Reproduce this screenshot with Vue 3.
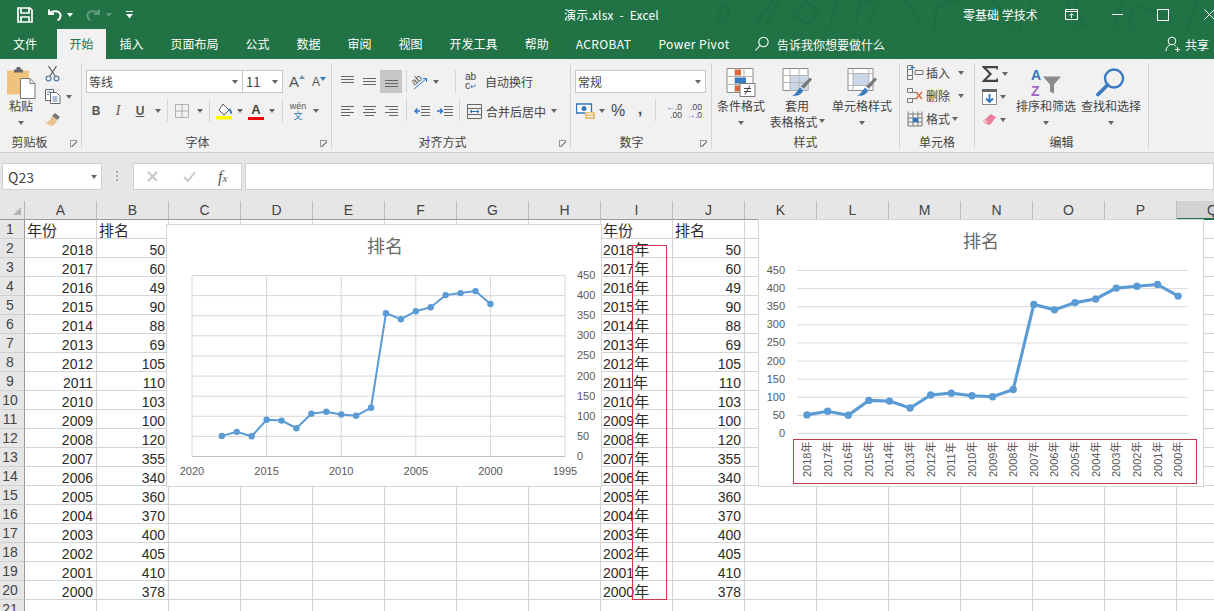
<script setup>
import { computed } from 'vue'

const years = [2018,2017,2016,2015,2014,2013,2012,2011,2010,2009,2008,2007,2006,2005,2004,2003,2002,2001,2000]
const values = [50,60,49,90,88,69,105,110,103,100,120,355,340,360,370,400,405,410,378]
const letters = 'ABCDEFGHIJKLMNOPQ'.split('')
const rows = Array.from({ length: 21 }, (_, i) => i + 1)
const tabs = ['插入','页面布局','公式','数据','审阅','视图','开发工具','帮助','ACROBAT','Power Pivot']

// cell content for a sheet position
const cell = (row, col) => {
  if (row === 1) {
    if (col === 'A' || col === 'I') return { text: '年份' }
    if (col === 'B' || col === 'J') return { text: '排名' }
    return null
  }
  const i = row - 2
  if (i >= years.length) return null
  if (col === 'A') return { text: years[i], num: true }
  if (col === 'B' || col === 'J') return { text: values[i], num: true }
  if (col === 'I') return { text: years[i], suffix: '年' }
  return null
}

// chart 1: value axis on the right, x axis reversed, in card coordinates
const c1 = computed(() => values.map((v, i) => ({
  x: 26 + (2020 - years[i]) * 14.92,
  y: 232 - v * 181 / 450
})))
const c1Line = computed(() => c1.value.map(p => `${p.x},${p.y}`).join(' '))

// chart 2: category axis
const c2 = computed(() => values.map((v, i) => ({
  x: 49 + i * 20.62,
  y: 214 - v * 163 / 450
})))
const c2Line = computed(() => c2.value.map(p => `${p.x},${p.y}`).join(' '))

const ticks = [0,50,100,150,200,250,300,350,400,450]
</script>

<template>
  <div class="app">
    <div class="titlebar">
      <svg class="doodle" width="520" height="59" viewBox="0 0 520 59" fill="none" stroke="#000" stroke-opacity=".05" stroke-width="2.500">
        <path d="M28 4l8 3-4 16-8-3z M60 26l20-26M70 28l16-28"/>
        <path d="M100 16l12-14 12 8-10 14z M135 30l8-30 M160 28l8-28l14 4l-8 24"/>
        <path d="M208 -2l24 30M240 30l2-18c1-8 10-10 30-12M300 0l22 34M322 34l18-34"/>
        <path d="M372 -2l12 30l6-2l-10-28M420 30l8-30M440 6l30 8l-6 20l-30-8zM492 30l12-34"/>
      </svg>
      <div class="qat">
        <svg class="save" width="18" height="16" viewBox="0 0 18 16" fill="none" stroke="#fff" stroke-width="1.700">
          <path d="M2 1h12l2 2v12H2z"/><path d="M5 1v5h8V1M5 15v-5h8v5"/>
        </svg>
        <svg class="undo" width="15" height="13" viewBox="0 0 15 13" fill="none" stroke="#fff" stroke-width="2">
          <path d="M2 1.500v4.500h5"/><path d="M2.500 6c2-3.500 10-4 11 1 .5 3-1.500 4.500-3 5.500"/>
        </svg>
        <i class="caret white"></i>
        <svg class="redo" width="15" height="13" viewBox="0 0 15 13" fill="none" stroke="#5f9a7c" stroke-width="2">
          <path d="M13 1.500v4.500h-5"/><path d="M12.500 6c-2-3.500-10-4-11 1-.5 3 1.500 4.500 3 5.500"/>
        </svg>
        <i class="caret faded"></i>
        <svg class="custom" width="7" height="8" viewBox="0 0 7 8" fill="#fff"><path d="M0 0h7v1H0zM0 3h7L3.500 7.500z"/></svg>
      </div>
      <div class="doc-title">演示.xlsx&nbsp;&nbsp;-&nbsp;&nbsp;Excel</div>
      <div class="win">
        <span class="account">零基础 学技术</span>
        <svg class="w-ribbon" width="13" height="11" viewBox="0 0 13 11" fill="none" stroke="#fff"><path d="M.5.5h12v10H.5zM.5 2.500h12M6.500 9V5M4.500 6.500l2-2 2 2"/></svg>
        <span class="w-min"></span>
        <span class="w-max"></span>
        <svg class="w-close" width="11" height="11" viewBox="0 0 11 11" stroke="#fff"><path d="M.5.5l10 10M10.500.5l-10 10"/></svg>
      </div>
    </div>

    <div class="tabs">
      <div class="tab file">文件</div>
      <div class="tab active">开始</div>
      <div v-for="t in tabs" :key="t" class="tab" :class="{ latin: /[a-z]/i.test(t) }">{{ t }}</div>
      <div class="tell">
        <svg width="16" height="16" viewBox="0 0 16 16" fill="none" stroke="#fff" stroke-width="1.100"><circle cx="9.500" cy="6" r="4.700"/><path d="M6 9.500l-4.500 5"/></svg>
        <span>告诉我你想要做什么</span>
      </div>
      <div class="share">
        <svg width="16" height="16" viewBox="0 0 16 16" fill="none" stroke="#fff"><circle cx="7" cy="5" r="3.800"/><path d="M1 15c0-3.500 2-5 4-6M9.500 9.500c.8.300 1.200.6 1.700 1M10 13.500h5M12.500 11v5"/></svg>
        <span>共享</span>
      </div>
    </div>

    <div class="ribbon">
      <!-- clipboard -->
      <section class="grp g-clip">
        <div class="body">
          <div class="big paste">
            <svg width="30" height="32" viewBox="0 0 30 32">
              <path d="M1 4h22v24H1z" fill="#efc27d"/>
              <path d="M8 3h2l1-2.500h3L15 3h2v3H8z" fill="#666"/>
              <path d="M14.500 12H24l5 5v15H14.500z" fill="#fff" stroke="#777"/>
              <path d="M24 12v5h5" fill="none" stroke="#777"/>
            </svg>
            <span class="blabel">粘贴</span>
            <i class="caret under"></i>
          </div>
          <div class="clip-col">
            <div class="row s-row">
              <svg width="15" height="16" viewBox="0 0 15 16" fill="none" stroke="#5d7fa6" stroke-width="1.300">
                <path d="M3.500 0l6.500 10M11.500 0L5 10" stroke="#666"/><circle cx="3.500" cy="12.500" r="2.400"/><circle cx="11.500" cy="12.500" r="2.400"/>
              </svg>
            </div>
            <div class="row s-row">
              <svg width="16" height="15" viewBox="0 0 16 15" fill="#fff" stroke="#666">
                <path d="M.5.5h8v11h-8z"/><path d="M5.500 3.500h6l3.500 3.500v7.500H5.500z"/>
                <path d="M2 3h4M2 5.500h2M7.500 8h5M7.500 10h5M7.500 12h5" stroke="#5d7fa6"/>
              </svg>
              <i class="caret c-tight"></i>
            </div>
            <div class="row s-row">
              <svg width="17" height="15" viewBox="0 0 17 15">
                <path d="M10 1l5 4-3 3-5-4z" fill="#777"/>
                <path d="M7 4l5 4c-1 3-3 5-5 6l-7-3c3 0 5-3 7-7z" fill="#e8c287"/>
              </svg>
            </div>
          </div>
        </div>
        <div class="glabel">剪贴板</div>
        <i class="launcher"></i>
      </section>

      <!-- font -->
      <section class="grp g-font">
        <div class="body col">
          <div class="row r1">
            <div class="combo font-name"><span>等线</span><i class="caret"></i></div>
            <div class="combo font-size"><span>11</span><i class="caret"></i></div>
            <span class="grow-a big-a">A<svg width="6" height="4" viewBox="0 0 6 4" fill="#6d93b8"><path d="M0 4l3-4 3 4z"/></svg></span>
            <span class="grow-a small-a">A<svg width="6" height="4" viewBox="0 0 6 4" fill="#2f77bb"><path d="M0 0l3 4 3-4z"/></svg></span>
          </div>
          <div class="row r2">
            <span class="ic fb">B</span>
            <span class="ic fi">I</span>
            <span class="ic fu">U</span>
            <i class="caret"></i>
            <i class="sep m3"></i>
            <span class="ic ml3">
              <svg width="14" height="14" viewBox="0 0 14 14" fill="none" stroke="#777" stroke-dasharray="1 1"><path d="M.5.5h13v13H.5zM7 .5v13M.5 7h13"/></svg>
            </span>
            <i class="caret"></i>
            <i class="sep m3"></i>
            <span class="ic ml3">
              <svg width="18" height="17" viewBox="0 0 18 17">
                <path d="M8 1l6 6-5 5-5-5z" fill="#fff" stroke="#555"/><path d="M14 6c2 2 2.500 3.500 1.500 4.500" stroke="#3a7abf" stroke-width="2" fill="none"/>
                <path d="M1 13h16v3.500H1z" fill="#ffff00"/>
              </svg>
            </span>
            <i class="caret cm2"></i>
            <span class="ic ml-1 color-a">
              <b>A</b><i></i>
            </span>
            <i class="caret cm2"></i>
            <i class="sep m4"></i>
            <span class="ic ml4 wen"><small>wén</small><em>文</em></span>
            <i class="caret"></i>
          </div>
        </div>
        <div class="glabel">字体</div>
        <i class="launcher"></i>
      </section>

      <!-- alignment -->
      <section class="grp g-align">
        <div class="body col">
          <div class="row r1">
            <span class="ic ml4"><svg width="15" height="13" viewBox="0 0 15 13" stroke="#666"><path d="M1 1.500h13M1 4.500h13M1 7.500h13" /></svg></span>
            <span class="ic"><svg width="15" height="13" viewBox="0 0 15 13" stroke="#666"><path d="M1 3.500h13M1 6.500h13M1 9.500h13" /></svg></span>
            <span class="ic selected"><svg width="15" height="13" viewBox="0 0 15 13" stroke="#666"><path d="M1 5.500h13M1 8.500h13M1 11.500h13" /></svg></span>
            <i class="sep tall m4"></i>
            <span class="ic ml2">
              <svg class="over" width="18" height="16" viewBox="0 0 18 16" fill="none" stroke="#666">
                <text x="1" y="10" font-size="10" fill="#555" stroke="none" transform="rotate(-40 5 8)" font-family="Liberation Sans">ab</text>
                <path d="M3 15L15 5M12 4.500h3.500V8" stroke="#2f77bb"/>
              </svg>
            </span>
            <i class="caret cm2"></i>
            <i class="sep tall m16"></i>
            <span class="ic ml4 wrap-ic"><b>ab</b><b>c<i>↵</i></b></span>
            <span class="txt ml3">自动换行</span>
          </div>
          <div class="row r2">
            <span class="ic ml4"><svg width="15" height="13" viewBox="0 0 15 13" stroke="#666"><path d="M1 1.500h13M1 4.500h9M1 7.500h13M1 10.500h9"/></svg></span>
            <span class="ic"><svg width="15" height="13" viewBox="0 0 15 13" stroke="#666"><path d="M1 1.500h13M3 4.500h9M1 7.500h13M3 10.500h9"/></svg></span>
            <span class="ic"><svg width="15" height="13" viewBox="0 0 15 13" stroke="#666"><path d="M1 1.500h13M5 4.500h9M1 7.500h13M5 10.500h9"/></svg></span>
            <i class="sep tall m4"></i>
            <span class="ic ml4"><svg width="16" height="13" viewBox="0 0 16 13" fill="none"><path d="M7 1.500h9M7 4.500h9M7 7.500h9M7 10.500h9M1 12.500" stroke="#666"/><path d="M6 6H1M3.500 3.500L1 6l2.500 2.500" stroke="#2f77bb" stroke-width="1.500"/></svg></span>
            <span class="ic ml1"><svg width="16" height="13" viewBox="0 0 16 13" fill="none"><path d="M7 1.500h9M7 4.500h9M7 7.500h9M7 10.500h9" stroke="#666"/><path d="M0 6h5M3 3.500L5.500 6 3 8.500" stroke="#2f77bb" stroke-width="1.500"/></svg></span>
            <i class="sep tall m3"></i>
            <span class="ic ml3"><svg width="15" height="15" viewBox="0 0 15 15" fill="none" stroke="#666"><path d="M.5.5h14v14H.5zM.5 4.500h14M.5 10.500h14"/><path d="M3 7.500h9M5 6l-2 1.500L5 9M10 6l2 1.500L10 9" stroke="#2f77bb"/></svg></span>
            <span class="txt ml1">合并后居中</span>
            <i class="caret ml5"></i>
          </div>
        </div>
        <div class="glabel">对齐方式</div>
        <i class="launcher"></i>
      </section>

      <!-- number -->
      <section class="grp g-num">
        <div class="body col">
          <div class="row r1">
            <div class="combo num-fmt"><span>常规</span><i class="caret"></i></div>
          </div>
          <div class="row r2">
            <span class="ic ml4">
              <svg width="20" height="17" viewBox="0 0 20 17">
                <path d="M.5 1h15v9H.5z" fill="#fff" stroke="#2f77bb" stroke-width="1.300"/>
                <circle cx="8" cy="5.500" r="2.500" fill="#2f77bb"/>
                <path d="M9 9h10v7H9z" fill="#e9c07a"/><path d="M11 11h6M11 13.500h6" stroke="#fff"/>
              </svg>
            </span>
            <i class="caret cm2"></i>
            <span class="ic pct">%</span>
            <span class="ic comma">,</span>
            <i class="sep tall m5"></i>
            <span class="ic ml4 deci"><span><em>←</em>.0</span><span>.00</span></span>
            <span class="ic deci w20"><span>.00</span><span><em>→</em>.0</span></span>
          </div>
        </div>
        <div class="glabel">数字</div>
        <i class="launcher"></i>
      </section>

      <!-- styles -->
      <section class="grp g-style">
        <div class="body">
          <div class="big b-cond">
            <svg width="30" height="30" viewBox="0 0 30 30">
              <path d="M1 1h26v24H1z" fill="#fff" stroke="#8a8a8a"/>
              <path d="M1 9h26M1 17h26M9 1v24M18 1v24" stroke="#b5b5b5" fill="none"/>
              <path d="M9 2h6v6H9z" fill="#d9683a"/><path d="M9 10h11v6H9z" fill="#3a7abf"/><path d="M9 18h8v6H9z" fill="#d9683a"/>
              <path d="M14 16h15v13H14z" fill="#fff" stroke="#777"/>
              <path d="M18 21h7M18 24h7M24 18l-5 9" stroke="#444" fill="none"/>
            </svg>
            <span class="blabel">条件格式</span>
            <i class="caret under"></i>
          </div>
          <div class="big b-table">
            <svg width="30" height="30" viewBox="0 0 30 30">
              <path d="M1 1h25v22H1z" fill="#fff" stroke="#8a8a8a"/>
              <path d="M8 8h18v15H8z" fill="#c9d7e8"/>
              <path d="M1 8h25M1 15h25M8 1v22M17 1v22" stroke="#b5b5b5" fill="none"/>
              <path d="M28 10l2 2-8 9-3-2z" fill="#777"/>
              <path d="M18 20l3 3c-1 4-6 6-11 5 4-1 5-5 8-8z" fill="#3a7abf"/>
            </svg>
            <span class="blabel">套用</span>
            <span class="blabel second">表格格式<i class="caret"></i></span>
          </div>
          <div class="big b-cell">
            <svg width="30" height="30" viewBox="0 0 30 30">
              <path d="M1 1h25v22H1z" fill="#fff" stroke="#8a8a8a"/>
              <path d="M6 6h16v12H6z" fill="#c9d7e8"/>
              <path d="M1 6h25M1 18h25M6 1v22M22 1v22" stroke="#b5b5b5" fill="none"/>
              <path d="M28 10l2 2-8 9-3-2z" fill="#777"/>
              <path d="M18 20l3 3c-1 4-6 6-11 5 4-1 5-5 8-8z" fill="#3a7abf"/>
            </svg>
            <span class="blabel">单元格样式</span>
            <i class="caret under"></i>
          </div>
        </div>
        <div class="glabel">样式</div>
      </section>

      <!-- cells -->
      <section class="grp g-cells">
        <div class="body col tight">
          <div class="row s-row">
            <svg class="cell-ic" width="17" height="15" viewBox="0 0 17 15" fill="none" stroke="#777"><path d="M.5.5h5v4h-5zM.5 10.500h5v4h-5zM.5 4.500v6M5.500 4.500v6M8 5.500h8v4H8z"/><path d="M8 2.500H4l2-2M4 2.500l2 2" stroke="#2f77bb"/></svg>
            <span class="txt">插入</span><i class="caret ml8"></i>
          </div>
          <div class="row s-row">
            <svg class="cell-ic" width="17" height="15" viewBox="0 0 17 15" fill="none" stroke="#777"><path d="M.5.5h5v4h-5zM.5 10.500h5v4h-5zM5.500 4.500h5M5.500 10.500h5"/><path d="M9 4l6 7M15 4l-6 7" stroke="#d9683a" stroke-width="1.400"/></svg>
            <span class="txt">删除</span><i class="caret ml8"></i>
          </div>
          <div class="row s-row">
            <svg class="cell-ic" width="17" height="16" viewBox="0 0 17 16" fill="none" stroke="#777"><path d="M1 3h14v12H1zM1 7h14M1 11h14M6 3v12M11 3v12M1 .5v2M6 .5v2M11 .5v2M15 .5v2"/><path d="M6 7h5v4H6z" fill="#2f77bb" stroke="none"/></svg>
            <span class="txt">格式</span><i class="caret ml2"></i>
          </div>
        </div>
        <div class="glabel">单元格</div>
      </section>

      <!-- editing -->
      <section class="grp g-edit">
        <div class="body">
          <div class="edit-col tight">
            <div class="row s-row">
              <svg class="edit-ic" width="16" height="16" viewBox="0 0 16 16" fill="none" stroke="#444" stroke-width="2.200"><path d="M15.500 3.500V1.200H2L8.500 8 2 14.800h13.500v-2.300"/></svg>
              <i class="caret"></i>
            </div>
            <div class="row s-row">
              <svg class="edit-ic" width="15" height="16" viewBox="0 0 15 16"><path d="M.5.5h14v15H.5z" fill="#fff" stroke="#888"/><path d="M0 0h15v3H0z" fill="#666"/><path d="M7.500 5v8M4 9.500l3.500 3.500L11 9.500" fill="none" stroke="#2f77bb" stroke-width="1.800"/></svg>
              <i class="caret cm-1"></i>
            </div>
            <div class="row s-row">
              <svg class="edit-ic" width="15" height="13" viewBox="0 0 15 13"><path d="M9 1l5 3-6 8-4-1-3-3z" fill="#eb7f9b"/><path d="M1 8l3 3 2-2-3-3z" fill="#f4b9c9"/></svg>
              <i class="caret cm-1"></i>
            </div>
          </div>
          <div class="big b-sort">
            <svg class="over" width="32" height="30" viewBox="0 0 32 30">
              <text x="1" y="12.500" font-size="14" font-weight="700" fill="#2f77bb" font-family="Liberation Sans">A</text>
              <text x="1" y="28.500" font-size="14" font-weight="700" fill="#9a6ac6" font-family="Liberation Sans">Z</text>
              <path d="M13 9h18l-7 8v9l-4-2v-7z" fill="#8a8a8a"/>
            </svg>
            <span class="blabel">排序和筛选</span>
            <i class="caret under"></i>
          </div>
          <div class="big b-find">
            <svg width="30" height="30" viewBox="0 0 30 30" fill="none">
              <circle cx="18" cy="11" r="9" stroke="#3a7abf" stroke-width="2.400"/>
              <path d="M11.500 17.500L2 27" stroke="#3a7abf" stroke-width="3.800" stroke-linecap="round"/>
            </svg>
            <span class="blabel">查找和选择</span>
            <i class="caret under"></i>
          </div>
        </div>
        <div class="glabel">编辑</div>
      </section>
    </div>

    <div class="formula">
      <div class="namebox"><span>Q23</span><i class="caret"></i></div>
      <span class="dots"></span>
      <div class="fx-box">
        <svg width="11" height="11" viewBox="0 0 11 11" stroke="#c6c6c6" stroke-width="1.800"><path d="M1 1l9 9M10 1l-9 9"/></svg>
        <svg width="13" height="11" viewBox="0 0 13 11" fill="none" stroke="#c6c6c6" stroke-width="1.800"><path d="M1 6l4 4 7-9"/></svg>
        <span class="fx">f<sub>x</sub></span>
      </div>
      <div class="input"></div>
    </div>

    <div class="sheet-wrap">
      <div class="sheet">
        <div class="corner">
          <svg width="8" height="8" viewBox="0 0 8 8"><path d="M8 0v8H0z" fill="#b4b4b4"/></svg>
        </div>
        <div v-for="l in letters" :key="l" class="chead" :class="{ cur: l === 'Q' }">{{ l }}</div>
        <template v-for="r in rows" :key="r">
          <div class="rhead">{{ r }}</div>
          <div v-for="l in letters" :key="l" class="cell" :class="{ num: cell(r, l)?.num }">
            <template v-if="cell(r, l)">
              <span :class="cell(r, l).num || cell(r, l).suffix ? 'digits' : ''">{{ cell(r, l).text }}</span><span v-if="cell(r, l).suffix">{{ cell(r, l).suffix }}</span>
            </template>
          </div>
        </template>
      </div>

      <div class="year-mark"></div>

      <!-- scatter chart, reversed x axis -->
      <div class="chart chart1">
        <svg width="436" height="263" viewBox="0 0 436 263">
          <text x="219" y="29" class="c-title" text-anchor="middle">排名</text>
          <g stroke="#d6d6d6" fill="none">
            <path v-for="t in ticks" :key="t" :d="`M26 ${232.5 - t * 181 / 450}H399`"/>
            <path v-for="x in [26,100.6,175.200,249.800,324.400,399]" :key="x" :d="`M${x} 51V232`"/>
          </g>
          <path d="M26 232.500H399" stroke="#bfbfbf"/>
          <text v-for="t in ticks" :key="t" x="411" :y="236 - t * 181 / 450" class="c-axis">{{ t }}</text>
          <text v-for="(y, i) in [2020,2015,2010,2005,2000,1995]" :key="y" :x="26 + i * 74.6" y="251" text-anchor="middle" class="c-axis">{{ y }}</text>
          <polyline :points="c1Line" fill="none" stroke="#5b9bd5" stroke-width="2"/>
          <circle v-for="(p, i) in c1" :key="i" :cx="p.x" :cy="p.y" r="3.200" fill="#5b9bd5"/>
        </svg>
      </div>

      <!-- line chart -->
      <div class="chart chart2">
        <svg width="446" height="268" viewBox="0 0 446 268">
          <text x="223" y="29" class="c-title" text-anchor="middle">排名</text>
          <g stroke="#d9d9d9" fill="none">
            <path v-for="t in ticks" :key="t" :d="`M39 ${214.500 - t * 163 / 450}H430`"/>
          </g>
          <text v-for="t in ticks" :key="t" x="27" :y="218 - t * 163 / 450" text-anchor="end" class="c-axis">{{ t }}</text>
          <polyline :points="c2Line" fill="none" stroke="#5b9bd5" stroke-width="3.100"/>
          <circle v-for="(p, i) in c2" :key="i" :cx="p.x" :cy="p.y" r="3.700" fill="#5b9bd5"/>
          <text v-for="(y, i) in years" :key="y" class="c-axis c-vert" :transform="`translate(${53 + i * 20.62} 258) rotate(-90)`">{{ y }}年</text>
          <rect x="35.500" y="220.500" width="403" height="44" fill="none" stroke="#c0394f"/>
        </svg>
      </div>
    </div>
  </div>
</template>

<style>
html, body { margin: 0; width: 1214px; height: 611px; overflow: hidden; background: #e6e6e6; }
</style>

<style scoped>
.app {
  width: 1214px;
  height: 611px;
  overflow: hidden;
  display: flex;
  flex-direction: column;
  font-family: "Noto Sans CJK SC", "Liberation Sans", sans-serif;
  font-size: 12px;
  color: #444;
}
i, em { font-style: normal; }
svg { flex: none; }
.over { overflow: visible; }

/* title bar */
.titlebar {
  height: 29px;
  background: #217346;
  color: #fff;
  display: flex;
  align-items: center;
  position: relative;
  flex: none;
}
.doodle { position: absolute; left: 694px; top: 0; pointer-events: none; }
.qat { display: flex; align-items: center; width: 564px; flex: none; }
.save { margin-left: 16px; }
.undo { margin-left: 13px; }
.redo { margin-left: 10px; }
.custom { margin-left: 11px; }
.doc-title { width: 399px; flex: none; position: relative; white-space: nowrap; letter-spacing: .2px; }
.win { display: flex; align-items: center; position: relative; white-space: nowrap; flex: none; }
.account { width: 76px; flex: none; }
.w-ribbon { margin-left: 26px; }
.w-min { width: 11px; height: 1px; background: #fff; margin-left: 34px; flex: none; }
.w-max { width: 10px; height: 10px; border: 1px solid #fff; margin-left: 34px; flex: none; }
.w-close { margin-left: 35px; }

/* tabs */
.tabs {
  height: 30px;
  background: #217346;
  color: #fff;
  display: flex;
  align-items: center;
  flex: none;
  position: relative;
}
.tab { padding: 0 13.500px; line-height: 30px; white-space: nowrap; }
.tab.latin { letter-spacing: .4px; }
.tab.file { width: 29px; padding: 0 0 0 13px; margin-right: 15px; }
.tab.active { background: #f1f1f1; color: #217346; padding: 0 12.500px; }
.tell { display: flex; align-items: center; gap: 7px; margin-left: 11px; white-space: nowrap; }
.share { display: flex; align-items: center; gap: 4px; margin-left: 280px; white-space: nowrap; }

/* ribbon */
.ribbon {
  height: 89px;
  padding-top: 4px;
  background: #f1f1f1;
  border-bottom: 1px solid #cfcfcf;
  display: flex;
  flex: none;
  color: #444;
}
.grp {
  height: 85px;
  box-sizing: border-box;
  border-right: 1px solid #d4d4d4;
  display: flex;
  flex-direction: column;
  position: relative;
  flex: none;
}
.g-clip { width: 82px; }
.g-font { width: 250px; }
.g-align { width: 239px; }
.g-num { width: 141px; }
.g-style { width: 188px; }
.g-cells { width: 75px; }
.g-edit { width: 174px; }
.body { height: 70px; display: flex; flex: none; }
.body.col { flex-direction: column; padding-top: 7px; box-sizing: border-box; gap: 6px; }
.body.tight, .tight { flex-direction: column; display: flex; padding-top: 0; gap: 0; margin-top: -2px; }
.body.tight { height: 72px; }
.edit-col.tight { margin-top: -1px; }
.glabel { text-align: center; line-height: 18px; height: 15px; white-space: nowrap; }
.g-clip .glabel { padding-right: 22px; }
.g-font .glabel { padding-right: 18px; }
.g-align .glabel { padding-right: 17px; }
.g-num .glabel { padding-right: 19px; }
.launcher {
  position: absolute;
  right: 4px;
  bottom: 1px;
  width: 6px;
  height: 6px;
  border-left: 1px solid #999;
  border-top: 1px solid #999;
  background: linear-gradient(135deg, transparent 45%, #888 45%, #888 60%, transparent 60%);
}
.row { display: flex; align-items: center; flex: none; }
.r1 { height: 23px; }
.r2 { height: 24px; }
.s-row { height: 23px; }
.caret {
  display: inline-block;
  width: 0;
  height: 0;
  border-left: 3.500px solid transparent;
  border-right: 3.500px solid transparent;
  border-top: 4px solid #666;
  margin: 0 3px 0 4px;
  flex: none;
}
.caret.white { border-top-color: #fff; margin-left: 5px; }
.caret.faded { border-top-color: #5f9a7c; margin-left: 5px; }
.caret.under { margin: 8px 0 0; }
.c-tight { margin-left: 5px; }
.cm2 { margin-left: 2px; }
.cm-1 { margin-left: 3px; }
.ml1 { margin-left: 1px; }
.ml2 { margin-left: 2px; }
.ml3 { margin-left: 3px; }
.ml4 { margin-left: 4px; }
.ml5 { margin-left: 5px; }
.ml8 { margin-left: 8px; }
.ml-1 { margin-left: -1px; }
.ic {
  width: 22px;
  height: 23px;
  display: flex;
  align-items: center;
  justify-content: center;
  flex: none;
}
.sep { width: 1px; height: 22px; background: #d4d4d4; flex: none; }
.sep.m3 { margin-left: 3px; }
.sep.m4 { margin-left: 4px; }
.sep.m5 { margin-left: 5px; }
.sep.m16 { margin-left: 13px; }
.sep.tall { align-self: flex-start; }
.txt { white-space: nowrap; flex: none; }
.selected { background: #c6c6c6; }

.big { display: flex; flex-direction: column; align-items: center; padding-top: 3px; flex: none; }
.big > svg { height: 33px; flex: none; }
.blabel { line-height: 14px; white-space: nowrap; height: 14px; }
.blabel.second { margin-top: 1px; line-height: 15px; display: flex; align-items: center; }
.blabel.second .caret { margin: 0 0 0 1px; }
.paste { width: 34px; margin-left: 4px; }
.clip-col { margin-left: 6px; width: 34px; display: flex; flex-direction: column; margin-top: -1px; }
.clip-col .s-row { padding-left: 1px; }

.combo {
  height: 23px;
  box-sizing: border-box;
  background: #fff;
  border: 1px solid #c6c6c6;
  display: flex;
  align-items: center;
  justify-content: space-between;
  padding-left: 2px;
  font-size: 12px;
  flex: none;
}
.combo .caret { margin: 0 4px 0 0; }
.font-name { width: 157px; margin-left: 4px; }
.font-size { width: 40px; margin-left: 0; border-left: 0; padding-left: 3px; font-size: 13px; }
.num-fmt { width: 131px; margin-left: 4px; }
.grow-a { display: flex; align-items: flex-start; font-family: "Liberation Sans", sans-serif; color: #555; flex: none; }
.big-a { font-size: 15px; margin-left: 6px; width: 21px; }
.small-a { font-size: 12px; margin-left: 2px; align-items: flex-start; }
.grow-a svg { margin-top: 2px; }
.fb, .fi, .fu { font-family: "Liberation Serif", serif; color: #555; font-size: 13px; font-weight: 700; }
.fb { font-family: "Liberation Sans", sans-serif; margin-left: 3px; font-size: 12px; }
.fi { font-style: italic; font-weight: 400; font-size: 14px; }
.fu { font-family: "Liberation Sans", sans-serif; text-decoration: underline; font-size: 12px; }
.color-a { flex-direction: column; line-height: 1; position: relative; }
.color-a b { font-family: "Liberation Sans", sans-serif; font-size: 13px; color: #444; line-height: 13px; }
.color-a i { display: block; width: 16px; height: 3px; background: #f00000; margin-top: 1px; }
.wen { flex-direction: column; font-size: 9px; line-height: 10px; }
.wen small { font-size: 9px; font-family: "Liberation Sans", sans-serif; color: #555; }
.wen em { color: #2f77bb; font-size: 9px; }
.wrap-ic { flex-direction: column; font-family: "Liberation Sans", sans-serif; font-size: 10px; line-height: 9px; align-items: flex-start; padding-left: 5px; box-sizing: border-box; }
.wrap-ic b { font-weight: 400; }
.wrap-ic i { color: #2f77bb; font-size: 8px; }
.pct { width: 20px; font-family: "Liberation Sans", sans-serif; font-size: 16px; }
.comma { font-family: "Liberation Sans", sans-serif; font-size: 15px; font-weight: 700; padding: 0 0 6px 2px; box-sizing: border-box; }
.deci { flex-direction: column; font-family: "Liberation Sans", sans-serif; font-size: 8.500px; line-height: 8px; align-items: flex-end; }
.deci.w20 { width: 20px; }
.deci em { color: #2f77bb; }

.b-cond { width: 50px; margin-left: 4px; }
.b-table { width: 58px; margin-left: 2px; }
.b-cell { width: 60px; margin-left: 6px; }
.g-cells .s-row { padding-left: 7px; }
.cell-ic { width: 17px; flex: none; margin-right: 2px; }
.edit-col { width: 41px; }
.edit-col .s-row { padding-left: 7px; }
.edit-ic { flex: none; }
.b-sort { width: 60px; }
.b-find { width: 60px; margin-left: 5px; }

/* formula bar */
.formula {
  height: 48px;
  box-sizing: border-box;
  padding: 10px 0 11px 2px;
  background: #e6e6e6;
  display: flex;
  flex: none;
}
.namebox, .fx-box, .input { background: #fff; border: 1px solid #d0d0d0; box-sizing: border-box; flex: none; }
.namebox {
  width: 100px;
  display: flex;
  align-items: center;
  justify-content: space-between;
  padding-left: 5px;
  font-size: 14px;
}
.namebox .caret { margin: 0 4px 0 0; }
.dots {
  width: 2px;
  height: 10px;
  margin: 8px 15px 0 14px;
  flex: none;
  background: repeating-linear-gradient(#aaa 0 2px, transparent 2px 4px);
}
.fx-box {
  width: 109px;
  display: flex;
  align-items: center;
  padding-left: 13px;
  gap: 25px;
}
.fx { font-family: "Liberation Serif", serif; font-style: italic; font-size: 16px; color: #555; margin-left: -3px; }
.fx sub { font-size: 11px; vertical-align: baseline; }
.input { width: 969px; margin-left: 3px; }

/* sheet */
.sheet-wrap { flex: 1; position: relative; overflow: hidden; background: #fff; min-height: 0; }
.sheet {
  display: grid;
  grid-template-columns: 25px repeat(17, 72px);
  grid-auto-rows: 19px;
  font-size: 15px;
  color: #2b2b2b;
}
.corner, .chead, .rhead { background: #e6e6e6; box-sizing: border-box; color: #444; font-size: 14px; }
.corner { border-right: 1px solid #b5b5b5; border-bottom: 1px solid #999; display: flex; align-items: flex-end; justify-content: flex-end; padding: 0 3px 4px 0; }
.chead { border-right: 1px solid #bdbdbd; border-bottom: 1px solid #999; text-align: center; line-height: 19px; font-family: "Liberation Sans", sans-serif; }
.chead.cur { background: #d2d2d2; border-bottom: 2px solid #217346; }
.rhead { border-right: 1px solid #999; border-bottom: 1px solid #d0d0d0; text-align: center; padding-right: 4px; line-height: 19px; font-family: "Liberation Sans", sans-serif; }
.cell {
  box-sizing: border-box;
  border-right: 1px solid #d4d4d4;
  border-bottom: 1px solid #d4d4d4;
  padding: 0 3px 0 2px;
  line-height: 19px;
  white-space: nowrap;
  overflow: hidden;
}
.cell.num { text-align: right; }
.digits { font-family: "Liberation Sans", sans-serif; font-size: 14px; }

.year-mark {
  position: absolute;
  left: 632px;
  top: 44px;
  width: 33px;
  height: 353px;
  border: 1px solid #c8384f;
}

.chart { position: absolute; background: #fff; border: 1px solid #d4d4d4; box-sizing: border-box; }
.chart svg { display: block; position: absolute; left: -1px; top: -1px; }
.chart1 { left: 166px; top: 23px; width: 436px; height: 263px; }
.chart2 { left: 758px; top: 18px; width: 446px; height: 268px; }
.c-title { font-size: 18px; fill: #6a6a6a; }
.c-axis { font-size: 11px; fill: #595959; font-family: "Liberation Sans", "Noto Sans CJK SC", sans-serif; }
</style>
